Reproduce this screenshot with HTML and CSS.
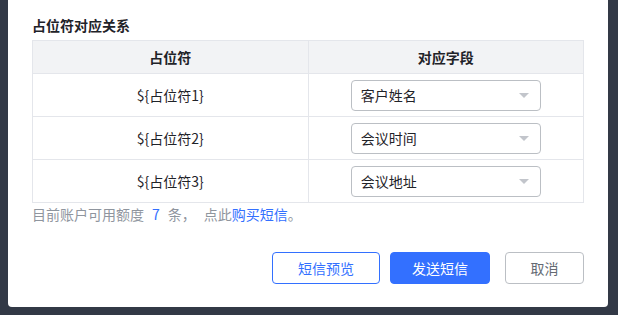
FILE: index.html
```html
<!DOCTYPE html>
<html lang="zh-CN">
<head>
    <meta charset="UTF-8">
    <meta name="viewport" content="width=device-width, initial-scale=1.0">
    <title>发送短信</title>
    <link rel="stylesheet" href="styles.css">
</head>
<body>
    <!-- Dialog -->
    <div class="dialog">
        <h3 class="section-title">占位符对应关系</h3>

        <table class="mapping-table">
            <thead>
                <tr>
                    <th>占位符</th>
                    <th>对应字段</th>
                </tr>
            </thead>
            <tbody>
                <tr>
                    <td>${占位符1}</td>
                    <td>
                        <div class="select">
                            <span>客户姓名</span>
                            <i class="arrow"></i>
                        </div>
                    </td>
                </tr>
                <tr>
                    <td>${占位符2}</td>
                    <td>
                        <div class="select">
                            <span>会议时间</span>
                            <i class="arrow"></i>
                        </div>
                    </td>
                </tr>
                <tr>
                    <td>${占位符3}</td>
                    <td>
                        <div class="select">
                            <span>会议地址</span>
                            <i class="arrow"></i>
                        </div>
                    </td>
                </tr>
            </tbody>
        </table>

        <p class="quota">目前账户可用额度<span class="count">7</span>条，<span class="buy">点此<a href="#">购买短信</a>。</span></p>

        <div class="dialog-footer">
            <button class="btn btn-outline">短信预览</button>
            <button class="btn btn-primary">发送短信</button>
            <button class="btn btn-default">取消</button>
        </div>
    </div>
</body>
</html>
```

FILE: styles.css
```css
/* General Styles */
body {
    margin: 0;
    background-color: #323946;
    font-family: "Noto Sans CJK SC", "Liberation Sans", sans-serif;
    color: #1f2329;
}

/* Dialog */
.dialog {
    width: 600px;
    margin-left: 8px;
    box-sizing: border-box;
    padding: 15px 24px 23px 24px;
    background-color: #fff;
    border-radius: 0 0 4px 4px;
}

.section-title {
    margin: 0 0 5px 0;
    font-size: 14px;
    line-height: 20px;
    font-weight: 700;
    color: #1f2329;
}

/* Table */
.mapping-table {
    width: 552px;
    border-collapse: collapse;
    font-size: 14px;
}

.mapping-table th,
.mapping-table td {
    border: 1px solid #e4e6eb;
    text-align: center;
    padding: 0;
    width: 50%;
}

.mapping-table th {
    height: 32px;
    background-color: #f2f3f5;
    font-weight: 700;
}

.mapping-table td {
    height: 42px;
}

.select {
    display: flex;
    align-items: center;
    justify-content: space-between;
    width: 190px;
    height: 31px;
    box-sizing: border-box;
    margin: 0 auto;
    padding: 0 11px 0 9px;
    border: 1px solid #bbbfc4;
    border-radius: 4px;
    font-size: 14px;
    text-align: left;
}

.arrow {
    width: 0;
    height: 0;
    border-left: 5px solid transparent;
    border-right: 5px solid transparent;
    border-top: 5px solid #c2c5cb;
}

/* Quota line */
.quota {
    margin: 1px 0 0 0;
    font-size: 14px;
    line-height: 20px;
    color: #8f959e;
}

.quota .count {
    color: #3370ff;
    margin: 0 8px;
}

.quota .buy {
    margin-left: 8px;
}

.quota a {
    color: #3370ff;
    text-decoration: none;
}

/* Footer */
.dialog-footer {
    display: flex;
    justify-content: flex-end;
    margin-top: 28px;
}

.btn {
    height: 32px;
    box-sizing: border-box;
    border-radius: 4px;
    font-family: inherit;
    font-size: 14px;
    cursor: pointer;
    background-color: #fff;
}

.btn-outline {
    width: 108px;
    border: 1px solid #3370ff;
    color: #3370ff;
}

.btn-primary {
    width: 100px;
    margin-left: 10px;
    border: 1px solid #3370ff;
    background-color: #3370ff;
    color: #fff;
}

.btn-default {
    width: 79px;
    margin-left: 15px;
    border: 1px solid #bbbfc4;
    color: #646a73;
}
```
